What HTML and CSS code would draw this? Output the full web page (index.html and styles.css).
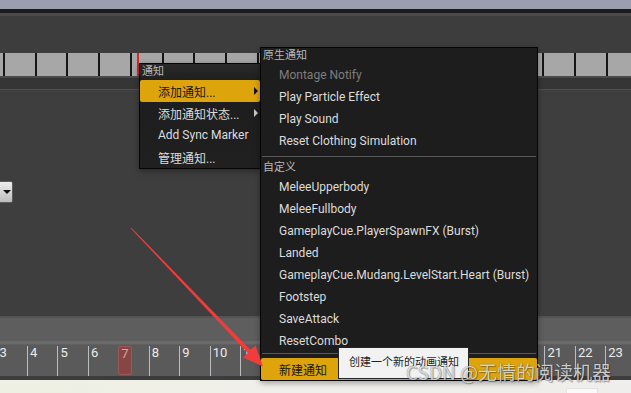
FILE: index.html
```html
<!DOCTYPE html>
<html lang="zh-CN">
<head>
    <meta charset="UTF-8">
    <meta name="viewport" content="width=device-width, initial-scale=1.0">
    <title>动画通知</title>
    <link rel="stylesheet" href="styles.css">
</head>
<body>
    <div class="editor">
        <div class="title-strip"></div>
        <div class="toolbar-edge"></div>
        <div class="panel"></div>

        <div class="segments">
            <div class="seg"></div><div class="seg"></div><div class="seg"></div><div class="seg"></div>
            <div class="seg"></div><div class="seg"></div><div class="seg"></div><div class="seg"></div>
            <div class="seg"></div><div class="seg"></div><div class="seg"></div><div class="seg"></div>
            <div class="seg"></div><div class="seg"></div><div class="seg"></div><div class="seg"></div>
            <div class="seg"></div><div class="seg"></div><div class="seg"></div><div class="seg"></div>
            <div class="playhead"></div>
        </div>
        <div class="segments-foot"></div>

        <div class="graph">
            <button class="dropdown"><span class="caret"></span></button>
        </div>

        <div class="track"></div>
        <div class="track-band"></div>

        <div class="ruler">
            <div class="ruler-frames">
                <div class="frame"><span>3</span></div>
                <div class="frame"><span>4</span></div>
                <div class="frame"><span>5</span></div>
                <div class="frame"><span>6</span></div>
                <div class="frame current"><span>7</span></div>
                <div class="frame"><span>8</span></div>
                <div class="frame"><span>9</span></div>
                <div class="frame"><span>10</span></div>
                <div class="frame"><span>11</span></div>
                <div class="frame"><span>12</span></div>
                <div class="frame"><span>13</span></div>
                <div class="frame"><span>14</span></div>
                <div class="frame"><span>15</span></div>
                <div class="frame"><span>16</span></div>
                <div class="frame"><span>17</span></div>
                <div class="frame"><span>18</span></div>
                <div class="frame"><span>19</span></div>
                <div class="frame"><span>20</span></div>
                <div class="frame"><span>21</span></div>
                <div class="frame"><span>22</span></div>
                <div class="frame"><span>23</span></div>
            </div>
        </div>
        <div class="ruler-foot"></div>
        <div class="page-foot"><span class="foot-box"></span></div>
    </div>

    <!-- context menu -->
    <div class="menu notify-menu">
        <div class="menu-title">通知</div>
        <div class="menu-item active">添加通知...<span class="sub-arrow"></span></div>
        <div class="menu-item">添加通知状态...<span class="sub-arrow"></span></div>
        <div class="menu-item">Add Sync Marker</div>
        <div class="menu-item">管理通知...</div>
    </div>

    <div class="menu sub-menu">
        <div class="menu-title">原生通知</div>
        <div class="menu-item disabled">Montage Notify</div>
        <div class="menu-item">Play Particle Effect</div>
        <div class="menu-item">Play Sound</div>
        <div class="menu-item">Reset Clothing Simulation</div>
        <div class="menu-sep"></div>
        <div class="menu-title">自定义</div>
        <div class="menu-item">MeleeUpperbody</div>
        <div class="menu-item">MeleeFullbody</div>
        <div class="menu-item">GameplayCue.PlayerSpawnFX (Burst)</div>
        <div class="menu-item">Landed</div>
        <div class="menu-item">GameplayCue.Mudang.LevelStart.Heart (Burst)</div>
        <div class="menu-item">Footstep</div>
        <div class="menu-item">SaveAttack</div>
        <div class="menu-item">ResetCombo</div>
        <div class="menu-sep last"></div>
        <div class="menu-item active new-notify">新建通知</div>
    </div>

    <div class="tooltip">创建一个新的动画通知</div>

    <svg class="arrow" width="631" height="393" viewBox="0 0 631 393">
        <polygon points="131.4,227.7 250.6,350.1 255.5,345.5 263,366.5 243,357.5 247.8,352.9 130.6,228.3"></polygon>
    </svg>

    <div class="watermark">CSDN @无情的阅读机器</div>
</body>
</html>
```

FILE: styles.css
```css
:root {
    --orange: #dea40c;
    --menu-bg: #1d1d1d;
    --menu-text: #dcdcdc;
    --graph: #3e3e3e;
}

* {
    box-sizing: border-box;
}

body {
    margin: 0;
    width: 631px;
    height: 393px;
    overflow: hidden;
    position: relative;
    font-family: Roboto, "Noto Sans CJK SC", sans-serif;
    background: var(--graph);
}

.editor {
    display: flex;
    flex-direction: column;
    height: 393px;
}

.title-strip {
    height: 9px;
    background: #9a9fb0;
}

.toolbar-edge {
    height: 7px;
    background: #1b1b1b;
    border-bottom: 3px solid #4a4a4a;
}

.panel {
    height: 37px;
    background: #3d3d3d;
}

/* notify segments */
.segments {
    height: 23px;
    display: flex;
    padding-left: 3px;
    background: #a7a7a7;
    position: relative;
    overflow: hidden;
}

.seg {
    flex: 0 0 31.74px;
    border-left: 2px solid #161616;
    background: #a7a7a7;
}

.playhead {
    position: absolute;
    left: 137px;
    top: 0;
    width: 2px;
    height: 100%;
    background: #e02424;
}

.segments-foot {
    height: 14px;
    background: #353535;
    border-top: 2px solid #4a4a4a;
    border-bottom: 1px solid #4e4e4e;
}

.graph {
    flex: 1;
    background: var(--graph);
    padding-top: 91px;
}

.dropdown {
    display: flex;
    align-items: center;
    justify-content: center;
    width: 19px;
    height: 22px;
    margin: 0 0 0 -6px;
    padding: 0 0 0 6px;
    border: 1px solid #5c5c5c;
    border-radius: 2px;
    background: linear-gradient(#ededed, #bcbcbc);
}

.caret {
    width: 0;
    height: 0;
    border-left: 4px solid transparent;
    border-right: 4px solid transparent;
    border-top: 4px solid #111;
}

/* timeline */
.track {
    height: 25px;
    background: #5e5e5e;
    border-top: 2px solid #545454;
}

.track-band {
    height: 4px;
    background: #6a6a6a;
    border-bottom: 1px solid #606060;
}

.ruler {
    height: 31px;
    background: #5a5a5a;
    overflow: hidden;
}

.ruler-frames {
    display: flex;
    height: 100%;
    margin-left: -3.45px;
    padding-top: 1px;
}

.frame {
    flex: 0 0 30.45px;
    border-left: 1px solid #bdbdbd;
    padding-left: 2px;
    font-size: 13px;
    line-height: 14px;
    color: #ececec;
}

.frame.current {
    border-left-color: transparent;
    padding-left: 0;
}

.frame.current span {
    display: block;
    width: 14px;
    height: 29px;
    margin-left: -1px;
    padding-left: 2px;
    background: #874545;
    border: 1px solid #9d5656;
    border-radius: 2px;
    color: #dca0a0;
}

.ruler-foot {
    height: 4px;
    background: #3c3c3c;
}

.page-foot {
    height: 13px;
    padding: 8px 0 0 566px;
    background: linear-gradient(90deg, #edf0e2, #f1efea 40%, #efeeec);
}

.foot-box {
    display: block;
    width: 32px;
    height: 5px;
    background: #fafafa;
    border: 1px solid #e2e2e2;
    border-bottom: none;
    border-radius: 2px 2px 0 0;
}

/* menus */
.menu {
    position: absolute;
    background: var(--menu-bg);
    border: 1px solid #050505;
    box-shadow: 0 2px 6px rgba(0, 0, 0, 0.35);
}

.notify-menu {
    left: 139px;
    top: 63px;
    width: 122px;
    background: linear-gradient(#1c1c1c, #202020);
}

.sub-menu {
    left: 260px;
    top: 47px;
    width: 278px;
}

.menu-title {
    height: 16px;
    line-height: 15px;
    padding-left: 2px;
    font-size: 11px;
    color: #b8b8b8;
}

.notify-menu .menu-title {
    height: 16px;
    line-height: 16px;
    background: linear-gradient(#2a2a2a, #1f1f1f);
}

.sub-menu .menu-sep + .menu-title {
    height: 15px;
    line-height: 14px;
}

.menu-item {
    display: flex;
    align-items: center;
    height: 22px;
    padding-left: 18px;
    font-size: 12px;
    color: var(--menu-text);
    white-space: nowrap;
}

.menu-item.active {
    background: var(--orange);
    color: #151515;
    border-radius: 2px;
}

.menu-item.disabled {
    color: #7e7e7e;
}

.sub-arrow {
    margin-left: auto;
    margin-right: 2px;
    width: 0;
    height: 0;
    border-top: 4px solid transparent;
    border-bottom: 4px solid transparent;
    border-left: 4px solid #c8c8c8;
}

.menu-item.active .sub-arrow {
    border-left-color: #111;
}

.menu-sep {
    height: 1px;
    margin: 4px 1px 4px;
    background: #575757;
}

.menu-sep.last {
    margin: 1px 1px 4px;
}

.new-notify {
    border-radius: 0;
}

.tooltip {
    position: absolute;
    left: 338px;
    top: 347px;
    width: 131px;
    height: 32px;
    padding-left: 10px;
    line-height: 30px;
    font-size: 11px;
    color: #1e1e1e;
    background: #f2f2f2;
    border: 1px solid #262626;
}

.arrow {
    position: absolute;
    left: 0;
    top: 0;
    pointer-events: none;
}

.arrow polygon {
    fill: #f23b3b;
}

.watermark {
    position: absolute;
    left: 406px;
    top: 362px;
    font-family: "Noto Sans CJK SC", sans-serif;
    font-size: 19px;
    line-height: 19px;
    color: rgba(255, 255, 255, 0.75);
    text-shadow: 0 0 1px rgba(0, 0, 0, 0.55), 1px 1px 1px rgba(0, 0, 0, 0.3);
    white-space: nowrap;
    pointer-events: none;
}
```
